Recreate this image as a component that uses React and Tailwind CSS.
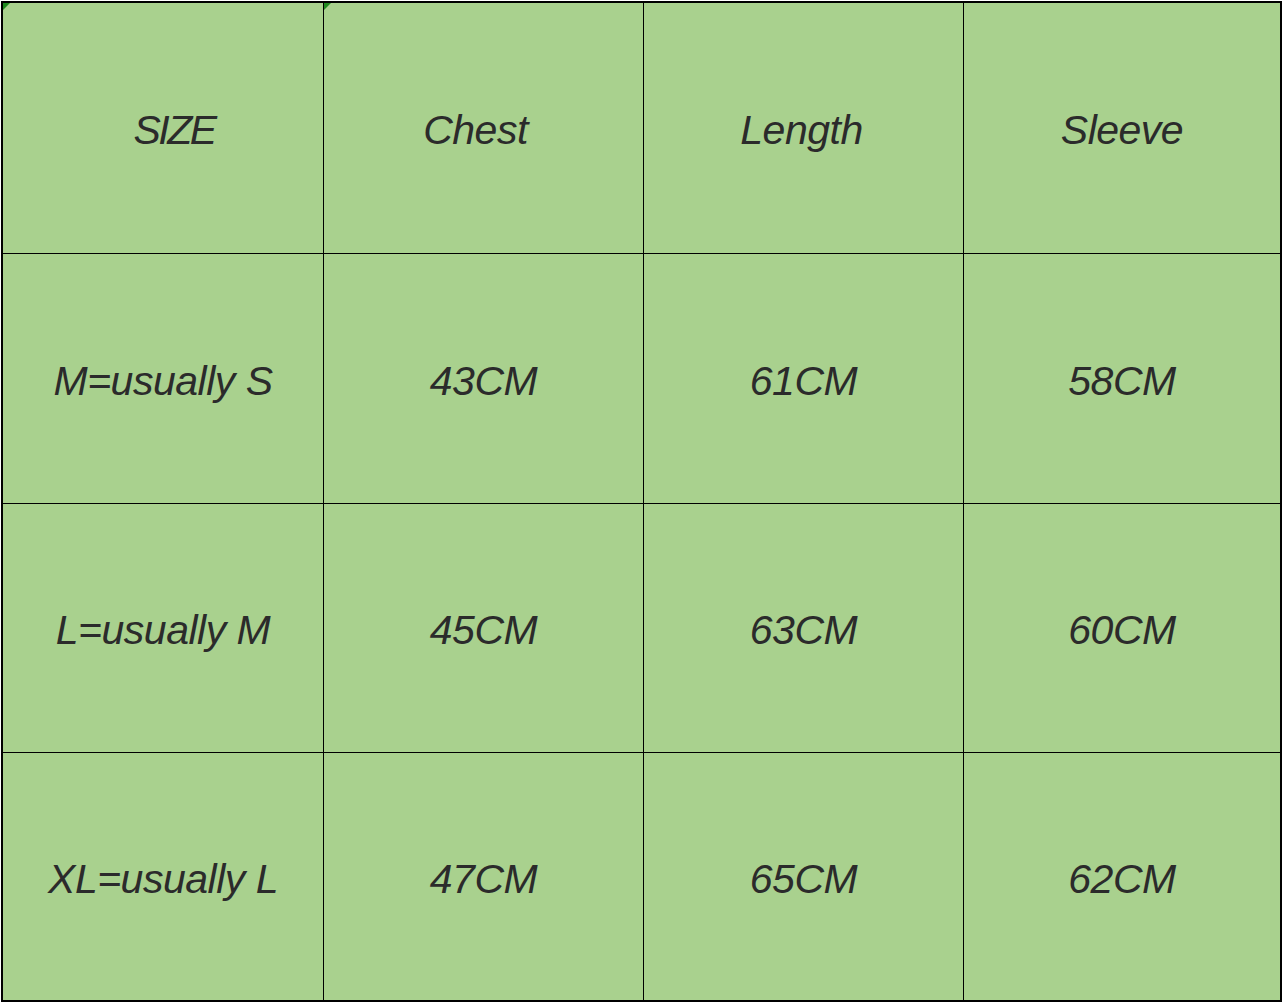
import React from 'react'

const rows = [
  ['SIZE', 'Chest', 'Length', 'Sleeve'],
  ['M=usually S', '43CM', '61CM', '58CM'],
  ['L=usually M', '45CM', '63CM', '60CM'],
  ['XL=usually L', '47CM', '65CM', '62CM'],
]

// small nudges so each label sits where it does in the sheet
const nudge = {
  '0-0': 'pl-[22px] tracking-[-2.5px]',
  '0-1': 'pr-[16px]',
  '0-2': 'pr-[4px]',
}

function Marker() {
  return (
    <svg className="absolute left-0 top-0" width="7" height="7" viewBox="0 0 7 7">
      <polygon points="0,0 7,0 0,7" fill="#1f8a1f" />
    </svg>
  )
}

export default function App() {
  return (
    <div className="w-[1283px] h-[1004px] bg-white pl-[1px] pt-[1px]">
      <div
        className="w-[1281px] h-[1001px] border-2 border-black bg-black grid grid-cols-[320px_319px_319px_1fr] grid-rows-[250px_249px_248px_1fr] gap-px"
        style={{ fontFamily: '"Liberation Sans", Arial, sans-serif' }}
      >
        {rows.flatMap((row, r) =>
          row.map((cell, c) => (
            <div
              key={r + '-' + c}
              className="relative bg-[#a9d18e] flex items-center justify-center pt-[6px] italic text-[41px] text-[#2b2b2b] tracking-[-0.5px]"
            >
              {r === 0 && c < 2 && <Marker />}
              <span className={nudge[r + '-' + c] || ''}>{cell}</span>
            </div>
          ))
        )}
      </div>
    </div>
  )
}
